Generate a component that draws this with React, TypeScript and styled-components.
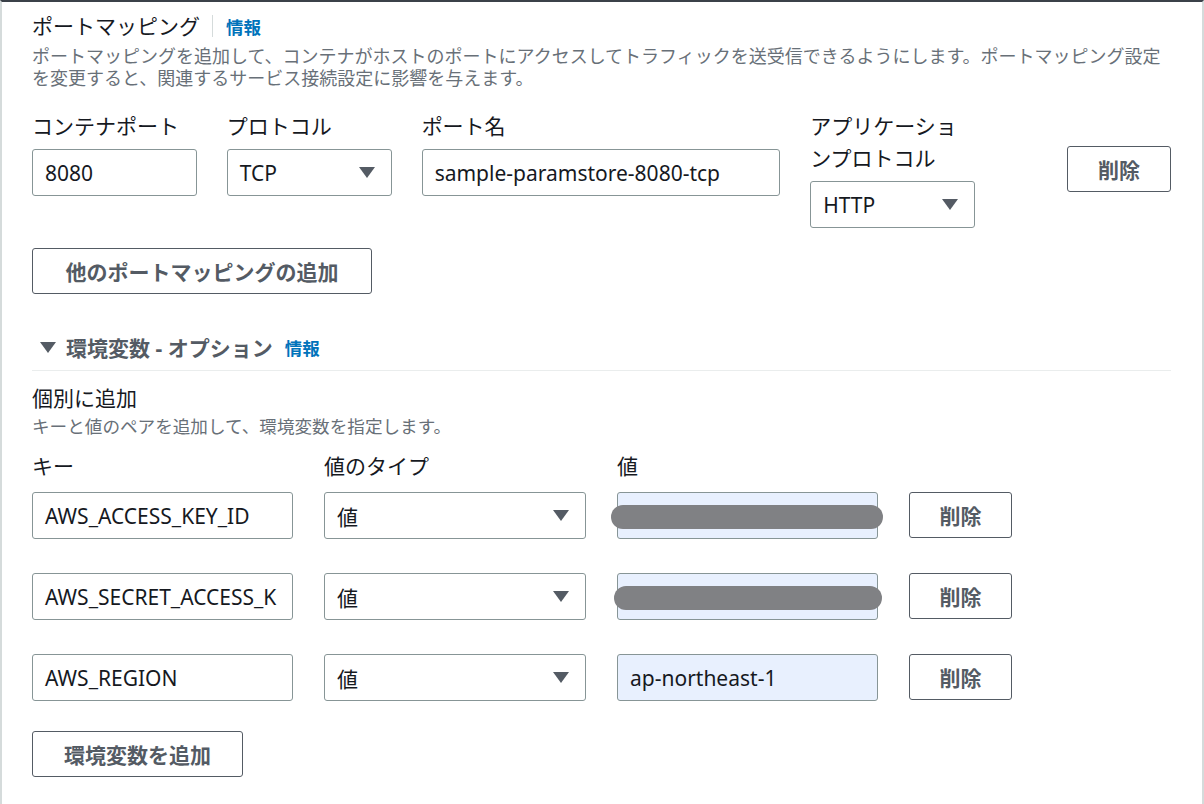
import styled, { createGlobalStyle } from "styled-components";

const GlobalStyle = createGlobalStyle`
  * { box-sizing: border-box; }
  body {
    margin: 0;
    background: #fff;
    font-family: "Noto Sans", "Noto Sans CJK JP", sans-serif;
    color: #16191f;
  }
`;

const Panel = styled.div`
  width: 1204px;
  height: 804px;
  overflow: hidden;
  border-top: 2px solid #3b4149;
  border-left: 2px solid #d5dbdb;
  border-right: 2px solid #d5dbdb;
  padding: 10px 31px 0 30px;
  display: flex;
  flex-direction: column;
`;

const TitleRow = styled.div`
  display: flex;
  align-items: center;
  height: 28px;
`;

const Title = styled.span`
  font-size: 21px;
  line-height: 28px;
  font-weight: 400;
`;

const Divider = styled.span`
  width: 1px;
  height: 22px;
  background: #d5dbdb;
  margin: 0 13px 0 12px;
`;

const InfoLink = styled.a<{ $gap?: number }>`
  color: #0073bb;
  font-size: 17.5px;
  font-weight: 700;
  margin-left: ${({ $gap }) => $gap ?? 0}px;
  text-decoration: none;
`;

const Description = styled.p`
  margin: 5px 0 0;
  font-size: 18px;
  line-height: 22px;
  color: #687078;
`;

const FieldRow = styled.div`
  display: flex;
  gap: 30px;
  margin-top: 21px;
  align-items: flex-start;
`;

const Field = styled.div<{ $width: number }>`
  width: ${({ $width }) => $width}px;
  display: flex;
  flex-direction: column;
`;

const Label = styled.label`
  font-size: 21px;
  line-height: 32px;
  margin-bottom: 7px;
`;

const Input = styled.div<{ $filled?: boolean }>`
  height: 47px;
  border: 1px solid #879596;
  border-radius: 3px;
  background: ${({ $filled }) => ($filled ? "#e8f0fe" : "#fff")};
  display: flex;
  align-items: center;
  padding: 0 12px;
  font-size: 21px;
  white-space: nowrap;
  overflow: hidden;
`;

const Select = styled(Input)`
  justify-content: space-between;
  padding-right: 16px;
`;

const Caret = styled.span`
  width: 0;
  height: 0;
  border-left: 8px solid transparent;
  border-right: 8px solid transparent;
  border-top: 11px solid #545b64;
`;

const Button = styled.button<{ $width: number }>`
  width: ${({ $width }) => $width}px;
  height: 46px;
  border: 1px solid #545b64;
  border-radius: 3px;
  background: #fff;
  color: #545b64;
  font-family: "Noto Sans", "Noto Sans CJK JP", sans-serif;
  font-size: 21px;
  font-weight: 700;
  padding: 0;
  flex-shrink: 0;
`;

const RemoveButton = styled(Button)<{ $top?: number; $left?: number }>`
  margin-top: ${({ $top }) => $top ?? 0}px;
  margin-left: ${({ $left }) => $left ?? 0}px;
`;

const AddPortButton = styled(Button)`
  margin-top: 20px;
`;

const SectionHeader = styled.div`
  display: flex;
  align-items: center;
  height: 32px;
  margin-top: 37px;
  padding-left: 8px;
`;

const SectionTriangle = styled.span`
  width: 0;
  height: 0;
  border-left: 8px solid transparent;
  border-right: 8px solid transparent;
  border-top: 11px solid #545b64;
  margin-right: 10px;
`;

const SectionTitle = styled.span`
  font-size: 21px;
  font-weight: 700;
  color: #545b64;
`;

const Separator = styled.hr`
  border: none;
  border-top: 1px solid #eaeded;
  margin: 7px 0 0;
  width: 100%;
`;

const SubTitle = styled.div`
  font-size: 21px;
  line-height: 28px;
  margin-top: 13px;
`;

const SmallDescription = styled(Description)`
  margin-top: 3px;
  font-size: 17.6px;
`;

const EnvLabels = styled.div`
  display: grid;
  grid-template-columns: 261px 262px 261px;
  column-gap: 31px;
  margin-top: 13px;
`;

const EnvRows = styled.div`
  display: flex;
  flex-direction: column;
  gap: 34px;
  margin-top: 3px;
`;

const EnvRow = styled.div`
  display: grid;
  grid-template-columns: 261px 262px 261px 103px;
  column-gap: 31px;
  align-items: start;
`;

const ValueCell = styled.div`
  position: relative;
`;

const Redaction = styled.span<{ $left: number; $right: number }>`
  position: absolute;
  top: 13px;
  left: ${({ $left }) => $left}px;
  right: ${({ $right }) => $right}px;
  height: 24px;
  border-radius: 12px;
  background: #808184;
`;

const AddEnvButton = styled(Button)`
  margin-top: 30px;
`;

const envVars = [
  { key: "AWS_ACCESS_KEY_ID", value: "", redact: { left: -6, right: -5 } },
  { key: "AWS_SECRET_ACCESS_K", value: "", redact: { left: -3, right: -4 } },
  { key: "AWS_REGION", value: "ap-northeast-1" },
];

export default function App() {
  return (
    <>
      <GlobalStyle />
      <Panel>
        <TitleRow>
          <Title>ポートマッピング</Title>
          <Divider />
          <InfoLink>情報</InfoLink>
        </TitleRow>
        <Description>
          ポートマッピングを追加して、コンテナがホストのポートにアクセスしてトラフィックを送受信できるようにします。ポートマッピング設定を変更すると、関連するサービス接続設定に影響を与えます。
        </Description>

        <FieldRow>
          <Field $width={165}>
            <Label>コンテナポート</Label>
            <Input>8080</Input>
          </Field>
          <Field $width={165}>
            <Label>プロトコル</Label>
            <Select>
              TCP
              <Caret />
            </Select>
          </Field>
          <Field $width={359}>
            <Label>ポート名</Label>
            <Input>sample-paramstore-8080-tcp</Input>
          </Field>
          <Field $width={165}>
            <Label>アプリケーションプロトコル</Label>
            <Select>
              HTTP
              <Caret />
            </Select>
          </Field>
          <RemoveButton $width={104} $top={36} $left={62}>
            削除
          </RemoveButton>
        </FieldRow>

        <AddPortButton $width={340}>他のポートマッピングの追加</AddPortButton>

        <SectionHeader>
          <SectionTriangle />
          <SectionTitle>環境変数 - オプション</SectionTitle>
          <InfoLink $gap={12}>情報</InfoLink>
        </SectionHeader>
        <Separator />

        <SubTitle>個別に追加</SubTitle>
        <SmallDescription>キーと値のペアを追加して、環境変数を指定します。</SmallDescription>

        <EnvLabels>
          <Label>キー</Label>
          <Label>値のタイプ</Label>
          <Label>値</Label>
        </EnvLabels>

        <EnvRows>
          {envVars.map((env) => (
            <EnvRow key={env.key}>
              <Input>{env.key}</Input>
              <Select>
                値
                <Caret />
              </Select>
              <ValueCell>
                <Input $filled>{env.value}</Input>
                {env.redact && <Redaction $left={env.redact.left} $right={env.redact.right} />}
              </ValueCell>
              <RemoveButton $width={103}>削除</RemoveButton>
            </EnvRow>
          ))}
        </EnvRows>

        <AddEnvButton $width={211}>環境変数を追加</AddEnvButton>
      </Panel>
    </>
  );
}
